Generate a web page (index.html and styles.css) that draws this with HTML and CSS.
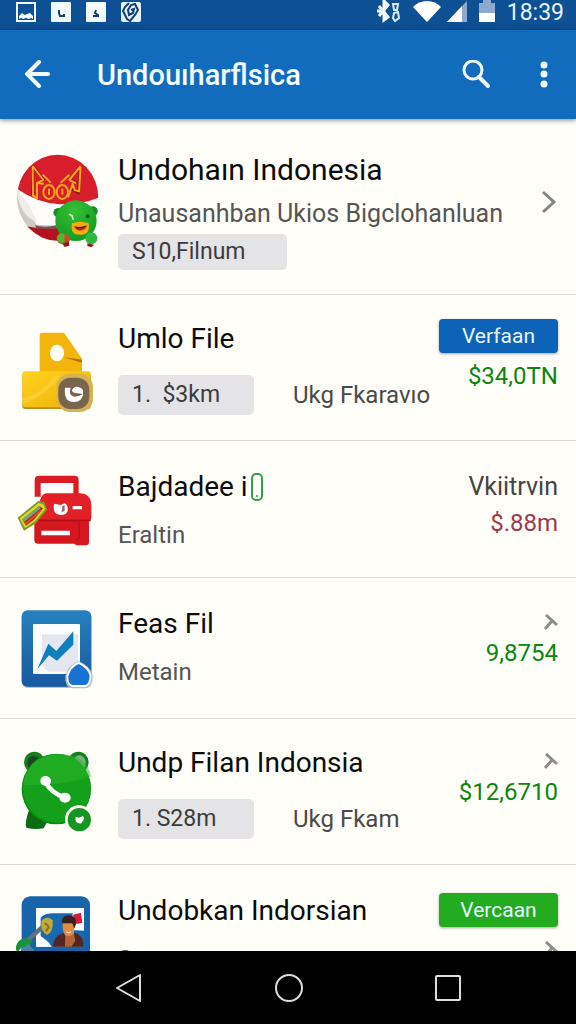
FILE: index.html
```html
<!DOCTYPE html>
<html lang="id">
<head>
    <meta charset="UTF-8">
    <meta name="viewport" content="width=device-width, initial-scale=1.0">
    <title>Undouıharflsica</title>
    <link rel="stylesheet" href="styles.css">
</head>
<body>
    <!-- Status bar -->
    <div class="status">
        <div class="status-left">
            <svg width="20" height="20" viewBox="0 0 20 20"><path d="M1 1h18v18H1z" fill="none" stroke="#f2fbff" stroke-width="2"/><path d="M3 17v-3l3-3 3 2 2-1 3-1 3 3v3l-2-1-2 1-3-1-3 1-2-1z" fill="#f2fbff"/></svg>
            <svg width="20" height="20" viewBox="0 0 20 20"><rect width="20" height="20" rx="1" fill="#f2fbff"/><path d="M8 8v3l1 3h4v-2" fill="none" stroke="#153f70" stroke-width="2"/></svg>
            <svg width="20" height="20" viewBox="0 0 20 20"><rect width="20" height="20" rx="1" fill="#f2fbff"/><path d="M10 8l-1 3 3 2v1H7" fill="none" stroke="#153f70" stroke-width="2"/></svg>
            <svg width="20" height="20" viewBox="0 0 20 20"><rect width="20" height="20" rx="2" fill="#e4f3fb"/><path d="M8 1L4 5 2 9l4 8 3 2 5-6 3-5-3-6-4 1-3 5 1 5 4-2 1-4-3 1" fill="none" stroke="#123f70" stroke-width="2"/></svg>
        </div>
        <div class="status-right">
            <svg width="24" height="24" viewBox="0 0 24 24"><path d="M2 6l9 11-4 3V1l4 4L2 16M0 11h5" fill="none" stroke="#f2fbff" stroke-width="3"/><path d="M16 4l5 0-1 6h-3zM17 13l4-1 1 6-4 3-2-3z" fill="none" stroke="#d6eaf8" stroke-width="2"/></svg>
            <svg width="28" height="24" viewBox="0 0 28 24"><path d="M0 7C7-1 21-1 28 7L14 22z" fill="#fff"/></svg>
            <svg width="20" height="24" viewBox="0 0 20 24"><path d="M20 1v21H0z" fill="#8ea9cc"/><path d="M15 6v16H0z" fill="#fff"/></svg>
            <svg width="16" height="24" viewBox="0 0 16 24"><path d="M4 0h8v3h4v10H0V3h4z" fill="#8ea9cc"/><path d="M0 13h16v9H0z" fill="#fff"/></svg>
            <span class="clock">18:39</span>
        </div>
    </div>

    <!-- App bar -->
    <header class="appbar">
        <button class="icon-btn" aria-label="Back">
            <svg width="26" height="30" viewBox="0 0 26 30"><path d="M14 2L2 14l12 12M3 14h20" fill="none" stroke="#f2fbff" stroke-width="4" stroke-linecap="round"/></svg>
        </button>
        <h1>Undouıharflsica</h1>
        <button class="icon-btn" aria-label="Search">
            <svg width="30" height="30" viewBox="0 0 30 30"><circle cx="12" cy="10" r="9" fill="none" stroke="#f2fbff" stroke-width="3"/><path d="M18 17l9 9" stroke="#f2fbff" stroke-width="4" stroke-linecap="round"/></svg>
        </button>
        <button class="icon-btn" aria-label="Menu">
            <svg width="8" height="28" viewBox="0 0 8 28"><g fill="#f2fbff"><circle cx="4" cy="4" r="3.5"/><circle cx="4" cy="13" r="3.5"/><circle cx="4" cy="23" r="3.5"/></g></svg>
        </button>
    </header>

    <!-- List -->
    <main class="list">
        <section class="row first">
            <svg class="icon" width="84" height="96" viewBox="48 36 252 288">
                <defs>
                    <clipPath id="ball"><ellipse cx="173" cy="173" rx="122" ry="129"/></clipPath>
                    <radialGradient id="green" cx=".45" cy=".25" r=".8"><stop offset="0" stop-color="#35c035"/><stop offset="1" stop-color="#129a1e"/></radialGradient>
                </defs>
                <g clip-path="url(#ball)">
                    <path d="M48 36h252v288H48z" fill="#fdfcfb"/>
                    <path d="M48 36h252v135q-50 22-120 22-70-4-132-49z" fill="#d81e2a"/>
                    <path d="M48 140q34 75 62 114l70 3v68H48z" fill="#cfcac4"/>
                    <path d="M50 150q10 80 62 95l-28-55z" fill="#efedea"/>
                    <path d="M70 255q40 14 110 8v70H70z" fill="#b4121f"/>
                    <path d="M105 256q30 8 65 0v10h-60z" fill="#7a5050"/>
                </g>
                <g fill="none" stroke="#8f1a14" stroke-width="9"><path d="M98 78l32 40-18 10M98 80v86M242 78l-32 40 18 12M242 80l-8 78-20-12"/></g>
                <g fill="none" stroke="#f7a521" stroke-width="6" stroke-linejoin="round">
                    <path d="M98 78l32 42-18 8M98 80l1 86 12 9V128l20 4M242 78l-34 42 20 10M242 80l-5 74-13-4-6-18-14 40"/>
                    <ellipse cx="147" cy="156" rx="17" ry="21"/>
                    <ellipse cx="187" cy="156" rx="17" ry="21"/>
                    <path d="M128 104l24 24M208 104l-26 24M147 146v18M187 146v18"/>
                </g>
                <ellipse cx="176" cy="218" rx="16" ry="14" fill="#178c20"/>
                <ellipse cx="279" cy="214" rx="14" ry="15" fill="#178c20"/>
                <ellipse cx="228" cy="242" rx="62" ry="61" fill="url(#green)"/>
                <ellipse cx="190" cy="296" rx="20" ry="17" fill="#9a6a18"/>
                <ellipse cx="184" cy="294" rx="13" ry="14" fill="#4db82c"/>
                <ellipse cx="201" cy="296" rx="8" ry="12" fill="#d8462a"/>
                <ellipse cx="274" cy="295" rx="18" ry="18" fill="#2fb743"/>
                <path d="M188 312l18-8 2 13-14 4zM262 310l20 4-8 8-12-4z" fill="#7c2118"/>
                <path d="M216 250q24-10 50 0 4 24-10 32-14 4-32 0-12-8-8-32z" fill="#f5ae12"/>
                <path d="M222 258q18 6 40-2-6 16-22 16-14 0-18-14z" fill="#ce2c12"/>
                <path d="M228 261q10 8 28-3" fill="none" stroke="#5c1c0c" stroke-width="4"/>
                <circle cx="263" cy="229" r="6" fill="#175c20"/>
                <path d="M208 223l8 4 4 12" fill="none" stroke="#d7f4ce" stroke-width="5"/>
            </svg>
            <div class="info">
                <h2>Undohaın Indonesia</h2>
                <p>Unausanhban Ukios Bigclohanluan</p>
                <span class="chip wide">S10,Filnum</span>
            </div>
            <svg class="chevron" width="14" height="24" viewBox="0 0 14 24"><path d="M1 2l11 10L1 22" fill="none" stroke="#858585" stroke-width="3"/></svg>
        </section>

        <section class="row">
            <svg class="icon" width="84" height="94" viewBox="48 33 252 282">
                <defs><linearGradient id="gold" x2="1" y2="1"><stop offset="0" stop-color="#ffd21f"/><stop offset="1" stop-color="#efb00a"/></linearGradient></defs>
                <path d="M126 68h66l54 78v50H119V75q0-7 7-7z" fill="#f3b50c"/>
                <path d="M191 142l55 7v9z" fill="#ad7208"/>
                <ellipse cx="171" cy="129" rx="21" ry="25" fill="#fffef5"/>
                <rect x="67" y="188" width="205" height="109" rx="9" fill="#bd8a1c"/>
                <rect x="67" y="184" width="205" height="108" rx="9" fill="url(#gold)"/>
                <path d="M67 283q70-25 115-85h-18q-40 55-97 67z" fill="#ffd84a" opacity=".5"/>
                <rect x="170" y="191" width="109" height="115" rx="40" fill="#d6b253"/>
                <rect x="175" y="203" width="93" height="94" rx="36" fill="#78654c"/>
                <path d="M195 233h17q-8 22 10 27 16 0 28-9-4 25-28 25-32 0-27-43z" fill="#fff"/>
                <path d="M216 240q8-14 22-8 16 6 10 20l-20-3q-12 0-12-9z" fill="#fff"/>
            </svg>
            <div class="info">
                <h2>Umlo File</h2>
                <div class="meta"><span class="chip">1.&nbsp; $3km</span><span>Ukg Fkaravıo</span></div>
            </div>
            <div class="side lifted">
                <button class="btn blue">Verfaan</button>
                <span class="amount">$34,0TN</span>
            </div>
        </section>

        <section class="row plain">
            <svg class="icon" width="84" height="80" viewBox="48 42 252 240">
                <path fill-rule="evenodd" d="M118 62h105q13 0 13 13v50H104V75q0-13 14-13zM122 84v41h98V84z" fill="#dc1c24"/>
                <path d="M103 175h164v86q0 10-10 10h-28l-6-5H113q-10 0-10-10z" fill="#d7171f"/>
                <path d="M103 200l35-20h129v12l-28 7v50l-18 18 15-20v-48H103z" fill="#ad0f18"/>
                <path d="M138 115h100q36 0 36 38v34q0 12-12 12H120V137q4-18 18-22z" fill="#e22127"/>
                <path d="M120 196h152" stroke="#b30e18" stroke-width="5"/>
                <path d="M162 146l20 4 12-5q11 5 9 22-4 14-22 13-20-2-20-22z" fill="#fff"/>
                <path d="M186 154l8-4v18q-8 2-12 6 6-8 4-20z" fill="#a7646b"/>
                <path d="M218 153h28v10h-28zM124 227h86v14h-86z" fill="#fff"/>
                <path d="M53 188l62-50 18 3 9 22-34 42-36 22z" fill="#78972b"/>
                <path d="M59 190l57-46 14 4 6 14-30 36-31 21z" fill="#d9dc27"/>
                <path d="M67 193l51-40 11 7-25 32-26 20z" fill="#b62b20"/>
                <path d="M67 193l51-40 4 7-49 40z" fill="#70a980"/>
                <path d="M76 208l47-42" stroke="#eb5631" stroke-width="4"/>
            </svg>
            <div class="info">
                <h2>Bajdadee i<svg class="pill" width="13" height="28" viewBox="0 0 13 28"><rect x="1" y="1" width="10" height="26" rx="4" fill="none" stroke="#2ba544" stroke-width="2"/><circle cx="6" cy="23" r="1" fill="#2ba544"/></svg></h2>
                <p>Eraltin</p>
            </div>
            <div class="side">
                <span class="label">Vkiitrvin</span>
                <span class="amount red">$.88m</span>
            </div>
        </section>

        <section class="row plain">
            <svg class="icon" width="84" height="84" viewBox="48 18 252 252">
                <defs><linearGradient id="blue" x2="0" y2="1"><stop offset="0" stop-color="#2681bd"/><stop offset="1" stop-color="#1759a0"/></linearGradient></defs>
                <rect x="65" y="33" width="209" height="230" rx="18" fill="#8fb1d1"/>
                <rect x="65" y="31" width="209" height="229" rx="18" fill="url(#blue)"/>
                <rect x="99" y="72" width="141" height="150" rx="3" fill="#fbfdff"/>
                <path d="M126 103h108v112h-90l-18-20z" fill="#e4e8ee"/>
                <path d="M112 207l33-76 24 22 51-59v40l-49 48-24-16z" fill="#0d80bd"/>
                <path d="M236 183q37 17 42 43 1 38-22 39h-40q-22-4-20-37 8-33 40-45z" fill="#a9bfd8"/>
                <path d="M236 185q33 15 38 41 0 32-18 35h-38q-18-4-18-32 6-32 36-44z" fill="#fff"/>
                <path d="M236 192q28 13 33 35-1 24-13 28h-39q-13-4-12-26 6-26 31-37z" fill="#1773d3"/>
            </svg>
            <div class="info">
                <h2>Feas Fil</h2>
                <p>Metain</p>
            </div>
            <div class="side">
                <svg class="tick" width="14" height="16" viewBox="0 0 14 16"><path d="M2 1l11 10M8 7l-7 8" fill="none" stroke="#8c8c8c" stroke-width="3"/></svg>
                <span class="amount">9,8754</span>
            </div>
        </section>

        <section class="row">
            <svg class="icon" width="84" height="90" viewBox="48 15 252 270">
                <ellipse cx="103" cy="67" rx="31" ry="32" fill="#14801b"/>
                <ellipse cx="235" cy="67" rx="31" ry="32" fill="#14801b"/>
                <ellipse cx="101" cy="69" rx="19" ry="22" fill="#174a20"/>
                <ellipse cx="238" cy="68" rx="19" ry="22" fill="#7fae83"/>
                <path d="M88 208l55 35-12 22q-28 5-52-2-6-15 9-55z" fill="#0b6b12"/>
                <ellipse cx="169" cy="147" rx="104" ry="106" fill="#0c8a13"/>
                <ellipse cx="171" cy="145" rx="102" ry="103" fill="#14a01b"/>
                <path d="M69 135q100 5 204-25-10-60-80-67-110-6-124 92z" fill="#29b529" opacity=".5"/>
                <path d="M137 126q17 34 57 46" fill="none" stroke="#fff" stroke-width="14"/>
                <ellipse cx="137" cy="123" rx="16" ry="15" fill="#fff"/>
                <ellipse cx="195" cy="173" rx="17" ry="15" fill="#fff"/>
                <circle cx="237" cy="238" r="42" fill="#fffef8"/>
                <circle cx="238" cy="239" r="35" fill="#16961e"/>
                <path d="M227 230l10 3 12-5 4 8-9 14q-21 2-17-20z" fill="#fff"/>
            </svg>
            <div class="info">
                <h2>Undp Filan Indonsia</h2>
                <div class="meta"><span class="chip">1. S28m</span><span>Ukg Fkam</span></div>
            </div>
            <div class="side">
                <svg class="tick" width="14" height="16" viewBox="0 0 14 16"><path d="M2 1l11 10M8 7l-7 8" fill="none" stroke="#8c8c8c" stroke-width="3"/></svg>
                <span class="amount">$12,6710</span>
            </div>
        </section>

        <section class="row plain">
            <svg class="icon" width="84" height="84" viewBox="48 33 252 252">
                <rect x="65" y="43" width="205" height="230" rx="26" fill="#1764aa"/>
                <path d="M108 78h144v116H108z" fill="#f8fcff"/>
                <path d="M122 107q10-13 40-13h56l-4 50 38 2v48H152l-30-32z" fill="#1969af"/>
                <path d="M220 98l23-6 4 30-16 4-12-8z" fill="#d31f3b"/>
                <path d="M125 164l20 16 10 14h-45v-20z" fill="#f8fcff"/>
                <path d="M80 178l55-50" stroke="#62717c" stroke-width="13"/>
                <path d="M124 118q14-20 34-4 3 36-17 45-19-7-17-41z" fill="#c0aa39"/>
                <path d="M134 124q10 4 12 12-6 8-8 12" fill="none" stroke="#8a7120" stroke-width="6"/>
                <path d="M47 202q1-30 30-34l19 8-5 15-26 4-12 16z" fill="#189338"/>
                <path d="M62 198l25-12 22 28H64z" fill="#4b83a9"/>
                <path d="M157 194q5-36 35-41l39 1q21 14 20 40z" fill="#552621"/>
                <path d="M196 150h25l5 26-12 18h-19z" fill="#b4633d"/>
                <path d="M189 120h33v34q-13 14-27 5-10-14-6-39z" fill="#df8d44"/>
                <path d="M186 124q-3-23 20-24 24 2 22 26l-5 14-6-16z" fill="#3a211c"/>
                <path d="M199 150q8 5 14-1" stroke="#fff" stroke-width="3" fill="none"/>
            </svg>
            <div class="info">
                <h2>Undobkan Indorsian</h2>
                <p>Sonrt</p>
            </div>
            <div class="side">
                <button class="btn green">Vercaan</button>
                <svg class="tick" width="14" height="16" viewBox="0 0 14 16"><path d="M2 1l11 10M8 7l-7 8" fill="none" stroke="#8c8c8c" stroke-width="3"/></svg>
            </div>
        </section>
    </main>

    <!-- System navigation -->
    <nav class="navbar">
        <button class="icon-btn" aria-label="Back">
            <svg width="28" height="30" viewBox="0 0 28 30"><path d="M25 2v26L2 15z" fill="none" stroke="#ddd" stroke-width="2" stroke-linejoin="round"/></svg>
        </button>
        <button class="icon-btn" aria-label="Home">
            <svg width="28" height="28" viewBox="0 0 28 28"><circle cx="14" cy="14" r="13" fill="none" stroke="#ddd" stroke-width="2"/></svg>
        </button>
        <button class="icon-btn" aria-label="Recent apps">
            <svg width="26" height="26" viewBox="0 0 26 26"><rect x="1" y="1" width="24" height="24" rx="1" fill="none" stroke="#ddd" stroke-width="2"/></svg>
        </button>
    </nav>
</body>
</html>
```
FILE: styles.css
```css
* {
    box-sizing: border-box;
}
body {
    margin: 0;
    height: 100vh;
    display: flex;
    flex-direction: column;
    background: #fffef8;
    font-family: Roboto, Arial, sans-serif;
    color: #0c0c0c;
}
h1, h2, p {
    margin: 0;
    font-weight: 400;
}
svg {
    display: block;
    flex-shrink: 0;
}
button {
    border: 0;
    font-family: inherit;
    cursor: pointer;
}
.icon-btn {
    display: flex;
    padding: 0;
    background: none;
}
.status {
    display: flex;
    justify-content: space-between;
    align-items: flex-start;
    height: 30px;
    padding: 0 12px 0 16px;
    background: #0d5094;
}
.status-left {
    display: flex;
    gap: 15px;
    padding-top: 2px;
}
.status-right {
    display: flex;
    gap: 12px;
}
.status-right svg:nth-child(2) {
    margin-right: -6px;
}
.clock {
    font-size: 23px;
    line-height: 25px;
    color: #e4f4ff;
}
.appbar {
    display: flex;
    align-items: center;
    height: 89px;
    padding: 0 28px 0 25px;
    background: #126cbd;
    box-shadow: 0 1px 5px rgba(0,0,0,0.5);
    z-index: 1;
}
.appbar h1 {
    flex: 1;
    padding-left: 46px;
    font-size: 29px;
    font-weight: 500;
    color: #f2fbff;
}
.appbar .icon-btn:last-child {
    margin-left: 49px;
}
.list {
    flex: 1;
    min-height: 0;
    overflow-y: auto;
    scrollbar-width: none;
}
.row {
    display: flex;
    padding: 26px 18px 25px 16px;
    border-bottom: 1px solid #d9d8d4;
}
.row.first {
    padding-top: 33px;
    padding-bottom: 24px;
}
.row.plain {
    padding-top: 28px;
    padding-bottom: 28px;
}
.info {
    flex: 1;
    min-width: 0;
    padding-left: 18px;
    white-space: nowrap;
}
.row:not(.plain) .icon {
    margin-bottom: -4px;
}
h2 {
    display: flex;
    align-items: center;
    font-size: 28px;
    line-height: 36px;
}
.first h2 {
    font-size: 30px;
}
.pill {
    margin-left: 3px;
}
.info p {
    margin-top: 16px;
    font-size: 24px;
    line-height: 28px;
    color: #555;
}
.info .chip.wide {
    width: 169px;
    line-height: 36px;
}
.first .info p {
    margin: 12px 0 6px;
    font-size: 25px;
}
.meta {
    display: flex;
    align-items: center;
    gap: 39px;
    width: 0;
    margin-top: 18px;
    font-size: 24px;
    color: #4a4a4a;
}
.chip {
    flex: none;
    display: inline-block;
    width: 136px;
    padding: 0 14px;
    border-radius: 5px;
    background: #e4e3e6;
    font-size: 23px;
    line-height: 40px;
    color: #3c3c3c;
}
.chevron {
    margin: 38px 2px 0 0;
}
.side {
    display: flex;
    flex-direction: column;
    align-items: flex-end;
}
.side.lifted {
    margin-top: -2px;
}
.label {
    font-size: 25px;
    line-height: 36px;
    color: #444;
}
.amount {
    margin-top: 8px;
    font-size: 24px;
    line-height: 30px;
    color: #0b860f;
}
.amount.red {
    margin-top: 3px;
    color: #9b3a4b;
}
.btn {
    width: 119px;
    height: 34px;
    padding: 0;
    border-radius: 4px;
    font-size: 21px;
    line-height: 34px;
    color: #e8f8ff;
    box-shadow: 0 1px 3px rgba(0,0,0,0.35);
}
.blue {
    background: #0d63b7;
}
.green {
    background: #23ac20;
}
.tick {
    margin-top: 8px;
}
.btn + .tick {
    margin-top: 14px;
}
.navbar {
    display: flex;
    justify-content: space-between;
    align-items: center;
    height: 73px;
    padding: 0 20%;
    background: #000;
}
```
